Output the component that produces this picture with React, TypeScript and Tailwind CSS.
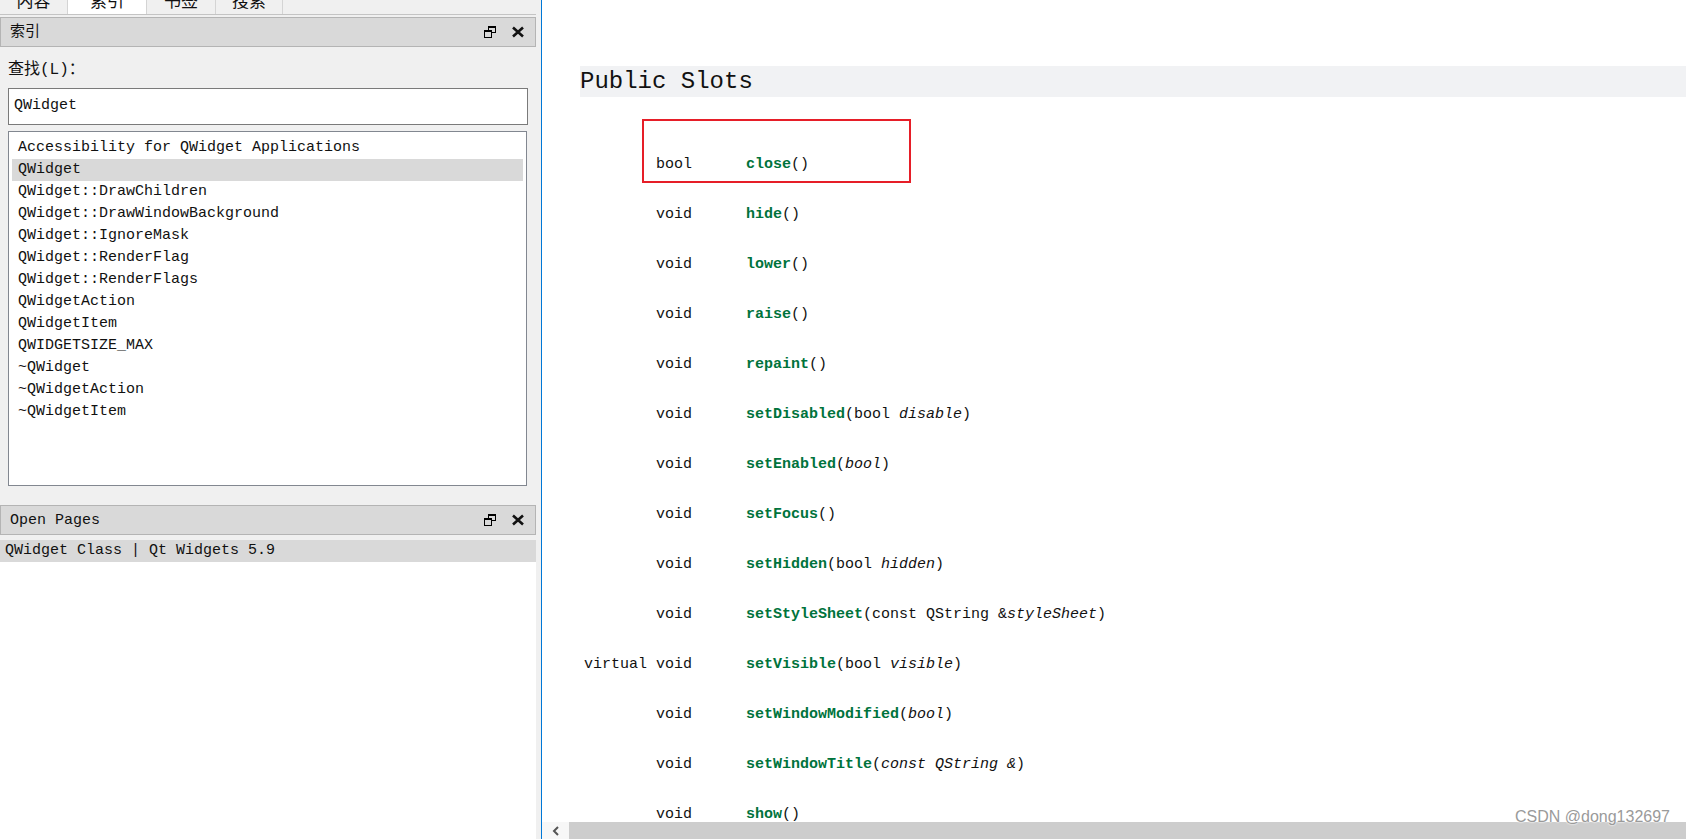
import React from 'react';

const mono = "font-['Liberation_Mono','Noto_Sans_CJK_SC',monospace]";

type Arg = [string, boolean];
type Slot = { pre: string; name: string; args: Arg[] };

const slots: Slot[] = [
  { pre: 'bool', name: 'close', args: [] },
  { pre: 'void', name: 'hide', args: [] },
  { pre: 'void', name: 'lower', args: [] },
  { pre: 'void', name: 'raise', args: [] },
  { pre: 'void', name: 'repaint', args: [] },
  { pre: 'void', name: 'setDisabled', args: [['bool ', false], ['disable', true]] },
  { pre: 'void', name: 'setEnabled', args: [['bool', true]] },
  { pre: 'void', name: 'setFocus', args: [] },
  { pre: 'void', name: 'setHidden', args: [['bool ', false], ['hidden', true]] },
  { pre: 'void', name: 'setStyleSheet', args: [['const QString &', false], ['styleSheet', true]] },
  { pre: 'virtual void', name: 'setVisible', args: [['bool ', false], ['visible', true]] },
  { pre: 'void', name: 'setWindowModified', args: [['bool', true]] },
  { pre: 'void', name: 'setWindowTitle', args: [['const QString &', true]] },
  { pre: 'void', name: 'show', args: [] },
];

const indexItems = [
  'Accessibility for QWidget Applications',
  'QWidget',
  'QWidget::DrawChildren',
  'QWidget::DrawWindowBackground',
  'QWidget::IgnoreMask',
  'QWidget::RenderFlag',
  'QWidget::RenderFlags',
  'QWidgetAction',
  'QWidgetItem',
  'QWIDGETSIZE_MAX',
  '~QWidget',
  '~QWidgetAction',
  '~QWidgetItem',
];

function FloatIcon() {
  return (
    <svg width="14" height="14" viewBox="0 0 14 14">
      <rect x="5.5" y="1.5" width="7" height="6" fill="none" stroke="#000" />
      <rect x="5" y="1" width="8" height="2" fill="#000" />
      <rect x="1.5" y="5.5" width="7" height="7" fill="#d9d9d9" stroke="#000" />
      <rect x="1" y="5" width="8" height="2" fill="#000" />
    </svg>
  );
}

function CloseIcon() {
  return (
    <svg width="14" height="14" viewBox="0 0 14 14">
      <path d="M2 2.5 L12 11.5 M12 2.5 L2 11.5" stroke="#111" strokeWidth="2.6" />
    </svg>
  );
}

function PanelHeader({ title }: { title: string }) {
  return (
    <div className="flex h-[30px] items-center justify-between border border-[#b4b4b4] bg-[#d9d9d9] pl-[9px] pr-[10px]">
      <span className={`${mono} pt-[2px] text-[15px] text-[#111]`}>{title}</span>
      <div className="flex items-center gap-[14px]">
        <FloatIcon />
        <CloseIcon />
      </div>
    </div>
  );
}

function Tabs() {
  const tabs = [
    { label: '内容', w: 'w-[68px]', active: false },
    { label: '索引', w: 'w-[79px]', active: true },
    { label: '书签', w: 'w-[69px]', active: false },
    { label: '搜索', w: 'w-[67px]', active: false },
  ];
  return (
    <div className="h-[15px] overflow-hidden border-b border-[#c4c4c4]">
      <div className="-mt-[15px] flex h-[30px]">
        {tabs.map((t) => (
          <div
            key={t.label}
            className={`${t.w} flex items-center justify-center border-r border-[#d4d4d4] font-['Noto_Sans_CJK_SC',sans-serif] text-[17px] text-[#111] ${
              t.active ? 'bg-white' : 'bg-[#f0f0f0]'
            }`}
          >
            {t.label}
          </div>
        ))}
      </div>
    </div>
  );
}

function LeftPanel() {
  return (
    <div className={`flex w-[536px] flex-col bg-[#f0f0f0] ${mono}`}>
      <Tabs />
      <div className="mt-[2px]">
        <PanelHeader title="索引" />
      </div>
      <div className="px-[8px]">
        <div className="mt-[12px] h-[22px] text-[16px] leading-[22px] text-[#111]">查找(L)：</div>
        <div className="mt-[7px] flex h-[37px] w-[520px] items-center border border-[#7a7a7a] bg-white pl-[5px] text-[15px] text-[#111]">
          QWidget
        </div>
        <div className="mt-[6px] h-[355px] w-[519px] border border-[#828790] bg-white px-[3px] pt-[5px]">
          {indexItems.map((item) => (
            <div
              key={item}
              className={`h-[22px] pl-[6px] text-[15px] leading-[22px] text-[#111] ${
                item === 'QWidget' ? 'bg-[#d9d9d9]' : ''
              }`}
            >
              {item}
            </div>
          ))}
        </div>
      </div>
      <div className="mt-[19px]">
        <PanelHeader title="Open Pages" />
      </div>
      <div className="mt-[5px] h-[22px] bg-[#d9d9d9] pl-[5px] text-[15px] leading-[22px] text-[#111]">
        QWidget Class | Qt Widgets 5.9
      </div>
      <div className="flex-1 bg-white" />
    </div>
  );
}

function SlotRow({ slot }: { slot: Slot }) {
  return (
    <div className="grid h-[50px] grid-cols-[112px_1fr] items-center gap-x-[54px] text-[15px] text-[#111]">
      <div className="text-right whitespace-pre">{slot.pre}</div>
      <div className="whitespace-pre">
        <span className="font-bold text-[#00733c]">{slot.name}</span>
        <span>(</span>
        {slot.args.map(([text, italic], i) => (
          <span key={i} className={italic ? 'italic' : ''}>
            {text}
          </span>
        ))}
        <span>)</span>
      </div>
    </div>
  );
}

function Content() {
  return (
    <div className={`flex flex-1 flex-col overflow-hidden bg-white ${mono}`}>
      <div className="flex-1 overflow-hidden">
        <div className="ml-[38px] mt-[66px] h-[31px] bg-[#f1f2f4] text-[24px] leading-[31px] text-[#111]">
          Public Slots
        </div>
        <div className="relative ml-[38px] mt-[43px]">
          <div className="absolute left-[62px] top-[-21px] h-[64px] w-[269px] border-2 border-[#e61e28]" />
          {slots.map((s) => (
            <SlotRow key={s.name} slot={s} />
          ))}
        </div>
      </div>
      <div className="flex h-[17px]">
        <div className="flex w-[27px] items-center justify-center bg-[#f7f7f7]">
          <svg width="8" height="10" viewBox="0 0 8 10">
            <path d="M6 1 L2 5 L6 9" fill="none" stroke="#555" strokeWidth="2" />
          </svg>
        </div>
        <div className="flex-1 bg-[#cdcdcd]" />
      </div>
    </div>
  );
}

export default function App() {
  return (
    <div className="relative flex h-[839px] w-[1686px] overflow-hidden bg-white">
      <LeftPanel />
      <div className="w-[5px] bg-[#f0f0f0]" />
      <div className="w-px bg-[#0078d7]" />
      <Content />
      <div className="absolute bottom-[10px] right-[16px] font-['Liberation_Sans',sans-serif] text-[16px] text-[#9a9a9a] [text-shadow:0_0_2px_#fff,0_0_2px_#fff]">
        CSDN @dong132697
      </div>
    </div>
  );
}
